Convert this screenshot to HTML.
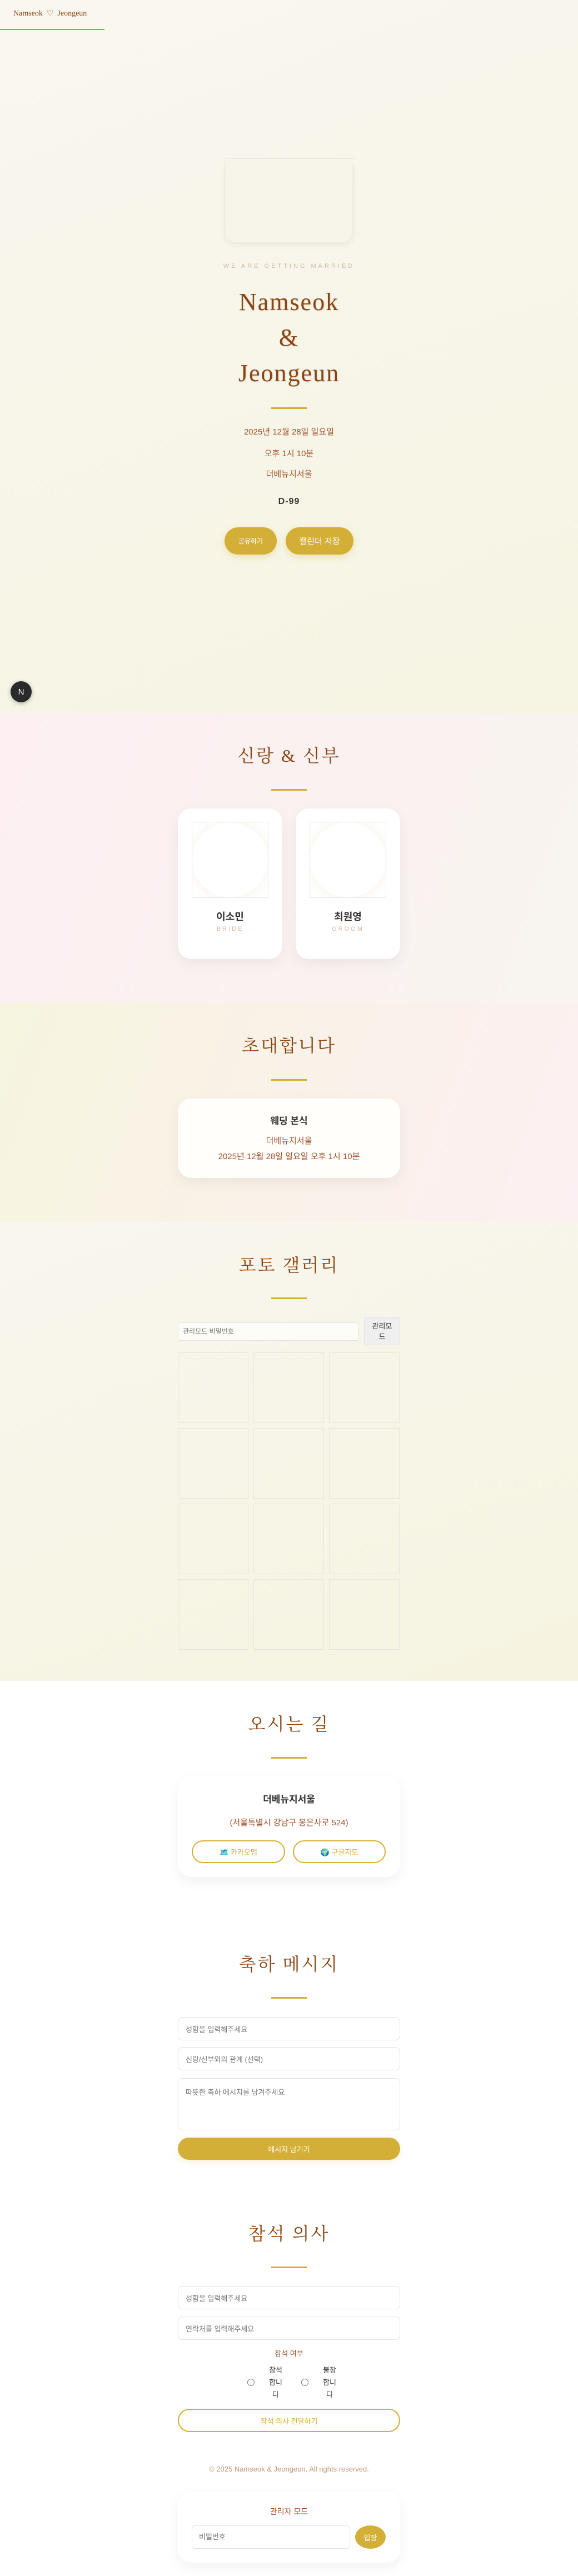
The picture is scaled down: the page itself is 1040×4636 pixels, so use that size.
<!DOCTYPE html>
<html><head><meta charset="utf-8"><style>
*{box-sizing:border-box;margin:0;padding:0}
body{width:1040px;height:4636px;position:relative;background:#fff;font-family:"Liberation Sans","Noto Sans CJK KR",sans-serif;overflow:hidden}
.a{position:absolute}
.c{position:absolute;left:0;width:1040px;text-align:center}
.title{font-family:"Liberation Serif","Noto Serif CJK SC",serif;color:#8b4513;font-size:32px;letter-spacing:3px;line-height:40px}
.div{position:absolute;left:488px;width:64px;height:3px;background:#d4af37}
.card{position:absolute;background:#fff;border-radius:24px;box-shadow:0 8px 24px rgba(0,0,0,0.06)}
.inp{position:absolute;left:320px;width:400px;background:#fff;border:1px solid #e3e3e3;border-radius:8px;font-size:13px;color:#777;padding-left:13px;display:flex;align-items:center}
.cell{position:absolute;width:127px;height:127px;border:1px solid #e6e6e0}
</style></head><body>
<!-- hero -->
<div class="a" style="left:0;top:0;width:1040px;height:1284px;background:linear-gradient(160deg,#f9f7ef,#f6f4e2)"></div>
<div class="a" style="left:24px;top:16px;font-family:'Liberation Serif',serif;color:#8b4513;font-size:14px">Namseok &nbsp;♡&nbsp; Jeongeun</div>
<div class="a" style="left:0;top:53px;width:188px;height:1px;background:#8b4513"></div>
<div class="a" style="left:404px;top:285px;width:232px;height:153px;border:1px solid #e6e8ea;border-radius:0"><div style="position:absolute;inset:1px;background:#f7f5ea;border-radius:20px;box-shadow:0 4px 14px rgba(0,0,0,0.06)"></div></div>
<div class="c" style="top:473px;font-size:11px;letter-spacing:4px;color:#d2b8a8">WE ARE GETTING MARRIED</div>
<div class="c" style="top:512px;font-family:'Liberation Serif',serif;color:#8b4513;font-size:44px;letter-spacing:2px;line-height:64px;text-shadow:1px 1px 2px rgba(0,0,0,0.12)">Namseok<br>&amp;<br>Jeongeun</div>
<div class="div" style="top:733px"></div>
<div class="c" style="top:769px;font-size:15px;color:#a0522d;line-height:18px">2025년 12월 28일 일요일</div>
<div class="c" style="top:805px;font-size:15px;color:#a0522d">오후 1시 10분</div>
<div class="c" style="top:842px;font-size:15px;color:#a0522d">더베뉴지서울</div>
<div class="c" style="top:894px;font-size:16px;font-weight:bold;color:#333;letter-spacing:1px">D-99</div>
<div class="a" style="left:404px;top:949px;width:94px;height:49px;border-radius:25px;background:#d4af37;color:#fff;font-size:12px;display:flex;align-items:center;justify-content:center;box-shadow:0 4px 12px rgba(212,175,55,0.3)">공유하기</div>
<div class="a" style="left:514px;top:949px;width:122px;height:49px;border-radius:25px;background:#d4af37;color:#fff;font-size:15px;display:flex;align-items:center;justify-content:center;box-shadow:0 4px 12px rgba(212,175,55,0.3)">캘린더 저장</div>
<div class="a" style="left:19px;top:1226px;width:38px;height:38px;border-radius:50%;background:#2a2a2a;color:#fff;font-size:15px;display:flex;align-items:center;justify-content:center;box-shadow:0 2px 8px rgba(0,0,0,0.3)">N</div>
<!-- couple -->
<div class="a" style="left:0;top:1284px;width:1040px;height:521px;background:linear-gradient(110deg,#fdeff2,#f8f4ef)"></div>
<div class="c title" style="top:1340px">신랑 &amp; 신부</div>
<div class="div" style="top:1420px"></div>
<div class="card" style="left:320px;top:1455px;width:188px;height:271px"></div>
<div class="card" style="left:532px;top:1455px;width:188px;height:271px"></div>
<div class="a" style="left:345px;top:1479px;width:138px;height:137px;border:1px solid #e8e8e8;overflow:hidden"><div style="position:absolute;left:0;top:0;width:136px;height:135px;border-radius:50%;background:#fff;box-shadow:0 0 20px rgba(230,220,180,0.35)"></div></div>
<div class="a" style="left:557px;top:1479px;width:138px;height:137px;border:1px solid #e8e8e8;overflow:hidden"><div style="position:absolute;left:0;top:0;width:136px;height:135px;border-radius:50%;background:#fff;box-shadow:0 0 20px rgba(230,220,180,0.35)"></div></div>
<div class="a" style="left:320px;top:1636px;width:188px;text-align:center;font-size:18px;font-weight:bold;color:#333">이소민</div>
<div class="a" style="left:320px;top:1666px;width:188px;text-align:center;font-size:11px;letter-spacing:3px;color:#d8b8a8">BRIDE</div>
<div class="a" style="left:532px;top:1636px;width:188px;text-align:center;font-size:18px;font-weight:bold;color:#333">최원영</div>
<div class="a" style="left:532px;top:1666px;width:188px;text-align:center;font-size:11px;letter-spacing:3px;color:#d8b8a8">GROOM</div>
<!-- invitation -->
<div class="a" style="left:0;top:1805px;width:1040px;height:394px;background:linear-gradient(110deg,#f6f5df,#faf1ea 60%,#fdf0f2)"></div>
<div class="c title" style="top:1862px">초대합니다</div>
<div class="div" style="top:1942px"></div>
<div class="card" style="left:320px;top:1977px;width:400px;height:143px;background:#fffefb"></div>
<div class="c" style="top:2003px;font-size:17px;font-weight:bold;color:#333">웨딩 본식</div>
<div class="c" style="top:2042px;font-size:15px;color:#a0522d">더베뉴지서울</div>
<div class="c" style="top:2070px;font-size:15px;color:#a0522d">2025년 12월 28일 일요일 오후 1시 10분</div>
<!-- gallery -->
<div class="a" style="left:0;top:2199px;width:1040px;height:826px;background:linear-gradient(160deg,#f8f6ee,#f6f4e0)"></div>
<div class="c title" style="top:2257px">포토 갤러리</div>
<div class="div" style="top:2335px"></div>
<div class="a" style="left:320px;top:2380px;width:326px;height:33px;background:#fdfdf8;border:1px solid #e2e2e2;border-radius:4px;font-size:12px;color:#777;padding-left:8px;line-height:31px">관리모드 비밀번호</div>
<div class="a" style="left:655px;top:2370px;width:65px;height:51px;background:#efefef;border:1px solid #e4e4e4;border-radius:4px;font-size:13px;color:#222;text-align:center;line-height:19px;padding-top:6px">관리모<br>드</div>
<div class="cell" style="left:320px;top:2434px"></div><div class="cell" style="left:456px;top:2434px"></div><div class="cell" style="left:592px;top:2434px"></div>
<div class="cell" style="left:320px;top:2570px"></div><div class="cell" style="left:456px;top:2570px"></div><div class="cell" style="left:592px;top:2570px"></div>
<div class="cell" style="left:320px;top:2706px"></div><div class="cell" style="left:456px;top:2706px"></div><div class="cell" style="left:592px;top:2706px"></div>
<div class="cell" style="left:320px;top:2842px"></div><div class="cell" style="left:456px;top:2842px"></div><div class="cell" style="left:592px;top:2842px"></div>
<!-- location -->
<div class="c title" style="top:3083px">오시는 길</div>
<div class="div" style="top:3162px"></div>
<div class="card" style="left:320px;top:3197px;width:400px;height:181px"></div>
<div class="c" style="top:3224px;font-size:17px;font-weight:bold;color:#333">더베뉴지서울</div>
<div class="c" style="top:3269px;font-size:15px;color:#a0522d">(서울특별시 강남구 봉은사로 524)</div>
<div class="a" style="left:345px;top:3312px;width:168px;height:41px;border:2px solid #d4af37;border-radius:21px;color:#d4af37;font-size:13px;display:flex;align-items:center;justify-content:center">🗺️ 카카오맵</div>
<div class="a" style="left:527px;top:3312px;width:167px;height:41px;border:2px solid #d4af37;border-radius:21px;color:#d4af37;font-size:13px;display:flex;align-items:center;justify-content:center">🌍 구글지도</div>
<!-- messages -->
<div class="c title" style="top:3515px">축하 메시지</div>
<div class="div" style="top:3594px"></div>
<div class="inp" style="top:3630px;height:42px">성함을 입력해주세요</div>
<div class="inp" style="top:3684px;height:42px">신랑/신부와의 관계 (선택)</div>
<div class="inp" style="top:3740px;height:94px;align-items:flex-start;padding-top:14px">따뜻한 축하 메시지를 남겨주세요</div>
<div class="a" style="left:320px;top:3847px;width:400px;height:40px;border-radius:20px;background:#d4af37;color:#fff;font-size:13px;display:flex;align-items:center;justify-content:center;box-shadow:0 4px 12px rgba(212,175,55,0.2)">메시지 남기기</div>
<!-- rsvp -->
<div class="c title" style="top:4000px">참석 의사</div>
<div class="div" style="top:4079px"></div>
<div class="inp" style="top:4114px;height:42px">성함을 입력해주세요</div>
<div class="inp" style="top:4169px;height:42px">연락처를 입력해주세요</div>
<div class="c" style="top:4225px;font-size:13px;color:#a0522d">참석 여부</div>
<div class="a" style="left:445px;top:4281px;width:13px;height:13px;border:1px solid #777;border-radius:50%"></div>
<div class="a" style="left:542px;top:4281px;width:13px;height:13px;border:1px solid #777;border-radius:50%"></div>
<div class="a" style="left:483px;top:4255px;width:26px;font-size:13px;color:#333;line-height:22px;text-align:center">참석<br>합니<br>다</div>
<div class="a" style="left:580px;top:4255px;width:26px;font-size:13px;color:#333;line-height:22px;text-align:center">불참<br>합니<br>다</div>
<div class="a" style="left:320px;top:4335px;width:400px;height:42px;border:2px solid #d4af37;border-radius:21px;color:#d4af37;font-size:13px;display:flex;align-items:center;justify-content:center">참석 의사 전달하기</div>
<div class="c" style="top:4436px;font-size:13px;color:#c4977a">© 2025 Namseok &amp; Jeongeun. All rights reserved.</div>
<div class="card" style="left:320px;top:4484px;width:400px;height:128px"></div>
<div class="c" style="top:4510px;font-size:14px;color:#a0522d">관리자 모드</div>
<div class="a" style="left:345px;top:4545px;width:285px;height:42px;border:1px solid #e3e3e3;border-radius:6px;font-size:13px;color:#777;padding-left:12px;line-height:40px">비밀번호</div>
<div class="a" style="left:639px;top:4545px;width:55px;height:42px;border-radius:50%;background:#d4af37;color:#fff;font-size:13px;display:flex;align-items:center;justify-content:center">입장</div>
</body></html>
